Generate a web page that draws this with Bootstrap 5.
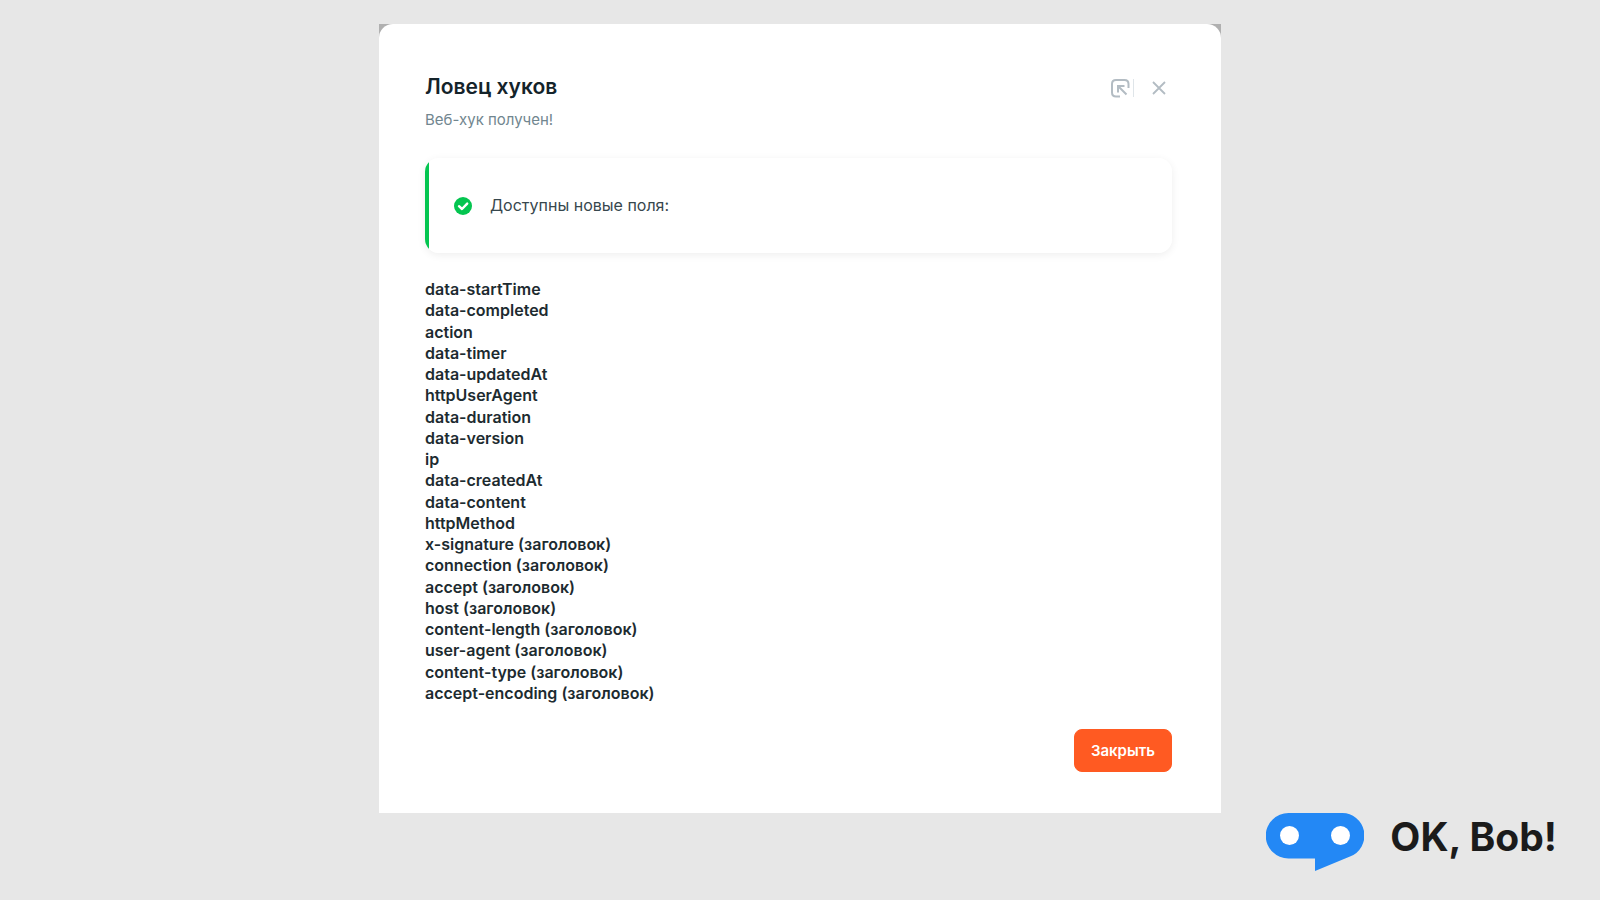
<!DOCTYPE html>
<html lang="ru">
<head>
<meta charset="utf-8">
<meta name="viewport" content="width=device-width, initial-scale=1">
<title>Ловец хуков</title>
<link rel="stylesheet" href="https://cdn.jsdelivr.net/npm/bootstrap@5.3.0/dist/css/bootstrap.min.css">
<style>
  body { background: #e7e7e7; color: #1d2b30; font-family: Inter, "Liberation Sans", sans-serif; font-size: 16px; line-height: 21px; padding-top: 24px; }
  .hook-backdrop { background: #b0b0b0; width: 100%; max-width: 842px; }
  .hook-dialog { background: #fff; border-radius: 14px 14px 0 0; padding: 48px 49px 41px 46px; }
  .hook-title { font-size: 21px; line-height: 30px; font-weight: 600; color: #14232a; }
  .hook-subtitle { font-size: 15px; line-height: 24px; color: #71868f; margin-top: 6px; }
  .icon-btn { background: none; border: 0; padding: 0; color: #b3bcc3; line-height: 0; }
  .hook-tools { padding: 6px 6px 0 0; }
  .tool-rule { width: 1px; height: 18px; background: #dfe5e9; margin: 0 18px 0 3px; }
  .hook-notice { margin-top: 26px; min-height: 95px; border-radius: 14px; box-shadow: 0 2px 8px rgba(0, 0, 0, .07); padding-left: 29px; gap: 18px; color: #37474d; background: linear-gradient(90deg, #04c550 4px, #fff 4px); }
  .field-list { margin: 26px 0 0; min-height: 425px; font-weight: 600; }
  .btn-close-hook { --bs-btn-color: #fff; --bs-btn-bg: #ff5a22; --bs-btn-border-color: #ff5a22; --bs-btn-hover-color: #fff; --bs-btn-hover-bg: #ea4c16; --bs-btn-hover-border-color: #ea4c16; font-size: 15px; font-weight: 600; line-height: 21px; padding: 10px 16px; border-radius: 8px; }
  .hook-actions { margin-top: 25px; }
  .brand-row { padding: 0 43px 28px; gap: 26px; }
  .brand-name { color: #1b1b1b; font-size: 39px; line-height: 48px; font-weight: 700; }
</style>
</head>
<body class="d-flex flex-column min-vh-100">
<main class="hook-backdrop mx-auto">
  <section class="hook-dialog" role="dialog" aria-labelledby="hookTitle">
    <header class="d-flex justify-content-between align-items-start">
      <div>
        <h1 class="hook-title mb-0" id="hookTitle">Ловец хуков</h1>
        <p class="hook-subtitle mb-0">Веб-хук получен!</p>
      </div>
      <div class="hook-tools d-flex align-items-center">
        <button type="button" class="icon-btn" aria-label="Развернуть">
          <svg width="20" height="20" viewBox="0 0 20 20" fill="none" stroke="currentColor" stroke-width="2"><path d="M10 18.500H6Q2 18.500 2 14.500V6Q2 2 6 2H14.500Q18.500 2 18.500 6V10"/><path d="M8 14.500V8H14.500M8.500 8.500L16.500 16.500"/></svg>
        </button>
        <span class="tool-rule"></span>
        <button type="button" class="icon-btn" aria-label="Закрыть окно">
          <svg width="14" height="14" viewBox="0 0 14 14" fill="none" stroke="currentColor" stroke-width="1.800"><path d="M1 1L13 13M13 1L1 13"/></svg>
        </button>
      </div>
    </header>
    <div class="hook-notice d-flex align-items-center" role="status">
      <svg width="18" height="18" viewBox="0 0 18 18"><circle cx="9" cy="9" r="9" fill="#04c550"/><path d="M5 9.200L8 12L13.200 6.600" fill="none" stroke="#fff" stroke-width="2.400" stroke-linecap="round" stroke-linejoin="round"/></svg>
      <span>Доступны новые поля:</span>
    </div>
    <ul class="field-list list-unstyled d-grid">
      <li>data-startTime</li>
      <li>data-completed</li>
      <li>action</li>
      <li>data-timer</li>
      <li>data-updatedAt</li>
      <li>httpUserAgent</li>
      <li>data-duration</li>
      <li>data-version</li>
      <li>ip</li>
      <li>data-createdAt</li>
      <li>data-content</li>
      <li>httpMethod</li>
      <li>x-signature (заголовок)</li>
      <li>connection (заголовок)</li>
      <li>accept (заголовок)</li>
      <li>host (заголовок)</li>
      <li>content-length (заголовок)</li>
      <li>user-agent (заголовок)</li>
      <li>content-type (заголовок)</li>
      <li>accept-encoding (заголовок)</li>
    </ul>
    <div class="hook-actions d-flex justify-content-end">
      <button type="button" class="btn btn-close-hook">Закрыть</button>
    </div>
  </section>
</main>
<footer class="brand-row d-flex justify-content-end">
  <svg width="98" height="58" viewBox="0 0 98 58" aria-hidden="true"><path d="M22.500 0H75.500A22.500 22.500 0 0 1 84 43.500L49 58V45.500H22.500A22.700 22.700 0 0 1 22.500 0Z" fill="#2388f5"/><circle cx="23.500" cy="22.500" r="9.500" fill="#fff"/><circle cx="74.500" cy="22.500" r="9.500" fill="#fff"/></svg>
  <span class="brand-name">OK, Bob!</span>
</footer>
<script src="https://cdn.jsdelivr.net/npm/bootstrap@5.3.0/dist/js/bootstrap.bundle.min.js"></script>
</body>
</html>
